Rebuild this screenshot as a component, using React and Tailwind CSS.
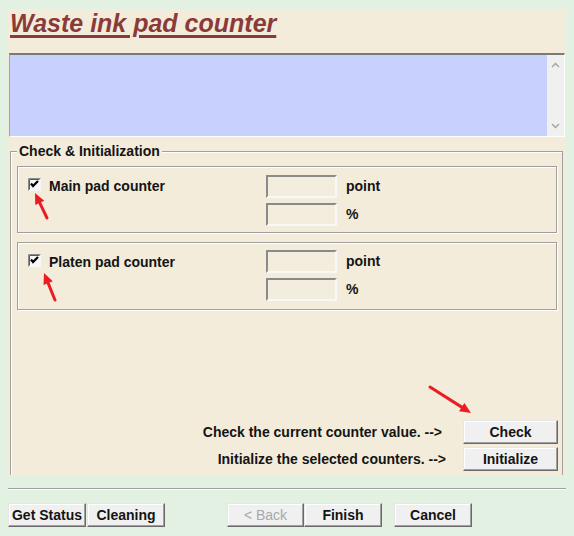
import React from 'react'

const btn =
  'h-[24px] bg-[#f0f0f0] border border-t-[#e6e6e6] border-l-[#e6e6e6] border-r-[#6a6a6a] border-b-[#6a6a6a] shadow-[inset_-1px_-1px_0_#a0a0a0,inset_1px_1px_0_#fff] text-[14px] font-bold leading-[20px] text-[#141414] flex items-center justify-center'

const sunken =
  'w-[71px] h-[23px] bg-[#f3eddd] border-2 border-t-[#8a8a8a] border-l-[#8a8a8a] border-r-[#f8f8f8] border-b-[#f8f8f8]'

function CheckBox() {
  return (
    <svg width="13" height="13" viewBox="0 0 13 13" className="shrink-0">
      <rect x="0" y="0" width="13" height="13" fill="#f7f7f7" />
      <path d="M0.5 12.5V0.5H12.5" fill="none" stroke="#8a8a8a" />
      <path d="M1.5 11.5V1.5H11.5" fill="none" stroke="#5a5a5a" />
      <path d="M3 5.5L5 8L10 3" fill="none" stroke="#000" strokeWidth="2.2" />
    </svg>
  )
}

function CounterBox({ label, className, top }) {
  return (
    <div className={`w-[540px] border border-[#a0a0a0] shadow-[inset_1px_1px_0_#fff,1px_1px_0_#fff] flex ${className}`}>
      <div className="w-[248px] flex items-start pl-[10px] pt-[11px]">
        <CheckBox />
        <span className="ml-[8px] text-[14px] font-bold leading-[16px] text-[#141414]">{label}</span>
      </div>
      <div className={`flex flex-col gap-[5px] ${top}`}>
        <div className="flex items-center">
          <div className={sunken}></div>
          <span className="ml-[9px] text-[14px] font-bold text-[#141414]">point</span>
        </div>
        <div className="flex items-center">
          <div className={sunken}></div>
          <span className="ml-[9px] text-[14px] font-bold text-[#141414]">%</span>
        </div>
      </div>
    </div>
  )
}

function Arrows() {
  const arrow = (x1, y1, x2, y2) => {
    const dx = x2 - x1
    const dy = y2 - y1
    const len = Math.sqrt(dx * dx + dy * dy)
    const ux = dx / len
    const uy = dy / len
    const hx = x2 - ux * 11
    const hy = y2 - uy * 11
    const px = -uy * 5
    const py = ux * 5
    return (
      <g>
        <line x1={x1} y1={y1} x2={hx} y2={hy} stroke="#ec1c24" strokeWidth="3" strokeLinecap="round" />
        <polygon points={`${x2},${y2} ${hx + px},${hy + py} ${hx - px},${hy - py}`} fill="#ec1c24" />
      </g>
    )
  }
  return (
    <svg className="absolute inset-0 pointer-events-none" width="574" height="536">
      {arrow(47, 218, 35, 193)}
      {arrow(55, 300, 44, 273)}
      {arrow(430, 387, 471, 413)}
    </svg>
  )
}

export default function App() {
  return (
    <div className="relative w-[574px] h-[536px] bg-[#e2f1e2] pt-[9px] px-[8px] font-['Liberation_Sans',Arial,sans-serif]">
      <div className="w-[558px] h-[466px] bg-[#f3ecda] flex flex-col">
        {/* title */}
        <div className="h-[44px] pl-[2px]">
          <span className="text-[25px] leading-[29px] font-bold italic text-[#8b3a3a] underline decoration-[3px] underline-offset-[3px]">
            Waste ink pad counter
          </span>
        </div>

        {/* log area */}
        <div className="ml-[1px] w-[556px] h-[84px] flex bg-[#c8d0fd] border-t-2 border-l border-t-[#7a7a7a] border-l-[#a0a0a0] border-r border-b border-r-[#fff] border-b-[#fff]">
          <div className="flex-1"></div>
          <div className="w-[17px] bg-[#f0f0f0] flex flex-col items-center justify-between py-[7px]">
            <svg width="9" height="6" viewBox="0 0 9 6">
              <path d="M1 5L4.5 1.5L8 5" fill="none" stroke="#a6a6a6" strokeWidth="1.5" />
            </svg>
            <svg width="9" height="6" viewBox="0 0 9 6">
              <path d="M1 1L4.5 4.5L8 1" fill="none" stroke="#a6a6a6" strokeWidth="1.5" />
            </svg>
          </div>
        </div>

        {/* group box */}
        <div className="relative mt-[14px] ml-[2px] w-[553px] flex-1 border-t border-l border-r border-[#a0a0a0] shadow-[inset_1px_1px_0_#fff] pl-[6px] pt-[14px]">
          <span className="absolute -top-[9px] left-[6px] px-[2px] bg-[#f3ecda] text-[14px] font-bold leading-[16px] text-[#141414]">
            Check &amp; Initialization
          </span>
          <CounterBox label="Main pad counter" className="h-[67px]" top="pt-[8px]" />
          <CounterBox label="Platen pad counter" className="h-[68px] mt-[9px]" top="pt-[7px]" />

          <div className="mt-[110px] w-[541px] flex flex-col items-end gap-[3px]">
            <div className="flex items-center">
              <span className="mr-[21px] text-[14px] font-bold text-[#141414]">Check the current counter value. --&gt;</span>
              <div className={`${btn} w-[95px]`}>Check</div>
            </div>
            <div className="flex items-center">
              <span className="mr-[17px] text-[14px] font-bold text-[#141414]">Initialize the selected counters. --&gt;</span>
              <div className={`${btn} w-[95px]`}>Initialize</div>
            </div>
          </div>
        </div>
      </div>

      {/* separator */}
      <div className="mt-[13px] w-[558px] h-[2px] border-t border-b border-t-[#a0a0a0] border-b-[#fff]"></div>

      {/* footer buttons */}
      <div className="mt-[13px] flex">
        <div className={`${btn} w-[78px]`}>Get Status</div>
        <div className={`${btn} w-[78px] ml-[1px]`}>Cleaning</div>
        <div className={`${btn} w-[77px] ml-[62px] !text-[#a8a8a8] font-normal`}>&lt; Back</div>
        <div className={`${btn} w-[78px]`}>Finish</div>
        <div className={`${btn} w-[78px] ml-[12px]`}>Cancel</div>
      </div>

      <Arrows />
    </div>
  )
}
